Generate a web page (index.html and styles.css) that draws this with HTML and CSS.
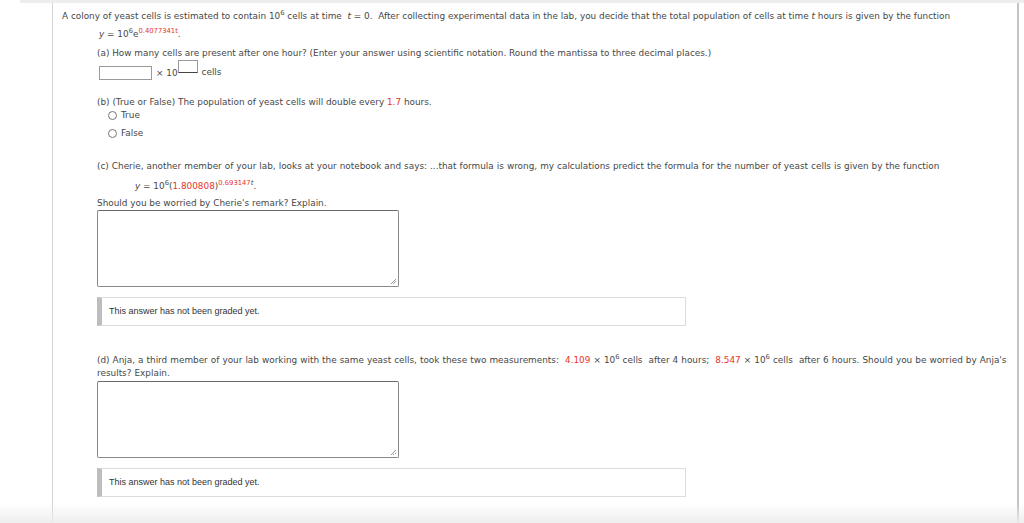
FILE: index.html
```html
<!DOCTYPE html>
<html>
<head>
<meta charset="utf-8">
<link rel="stylesheet" href="styles.css">
</head>
<body>
<div class="topbar"></div>
<div class="card">
  <p class="intro">A colony of yeast cells is estimated to contain 10<sup>6</sup> cells at time&nbsp; <i>t</i> = 0.&nbsp; After collecting experimental data in the lab, you decide that the total population of cells at time <i>t</i> hours is given by the function</p>
  <div class="body">
    <p class="formula f1"><i>y</i> = 10<sup>6</sup>e<sup class="red">0.4077341t</sup>.</p>
    <p class="qa">(a) How many cells are present after one hour? (Enter your answer using scientific notation. Round the mantissa to three decimal places.)</p>
    <div class="answer-row">
      <span class="box mant"></span>
      <span class="times">× 10</span>
      <span class="box expo"></span>
      <span class="cells">cells</span>
    </div>
    <p class="qb">(b) (True or False) The population of yeast cells will double every <span class="red">1.7</span> hours.</p>
    <div class="radios">
      <label class="radio"><span class="circle"></span>True</label>
      <label class="radio"><span class="circle"></span>False</label>
    </div>
    <p class="qc">(c) Cherie, another member of your lab, looks at your notebook and says: ...that formula is wrong, my calculations predict the formula for the number of yeast cells is given by the function</p>
    <p class="formula f2"><i>y</i> = 10<sup>6</sup>(<span class="red">1.800808</span>)<sup><span class="red">0.693147</span><i>t</i></sup>.</p>
    <p class="should">Should you be worried by Cherie's remark? Explain.</p>
    <div class="textarea"><span class="grip"></span></div>
    <div class="grade">This answer has not been graded yet.</div>
    <p class="qd">(d) Anja, a third member of your lab working with the same yeast cells, took these two measurements:&nbsp; <span class="red">4.109</span> × 10<sup>6</sup> cells&nbsp; after 4 hours;&nbsp; <span class="red">8.547</span> × 10<sup>6</sup> cells&nbsp; after 6 hours. Should you be worried by Anja's results? Explain.</p>
    <div class="textarea t2"><span class="grip"></span></div>
    <div class="grade g2">This answer has not been graded yet.</div>
  </div>
</div>
<div class="fade"></div>
</body>
</html>
```
FILE: styles.css
```css
html, body {
  margin: 0;
  padding: 0;
  background: #fff;
}
body {
  font-family: "DejaVu Sans", Verdana, sans-serif;
  font-size: 8.9px;
  line-height: 13px;
  color: #474747;
  height: 523px;
  overflow: hidden;
}
p { margin: 0; }
sup {
  font-size: 6.8px;
  line-height: 0;
  vertical-align: 4px;
}
.red { color: #e8342a; }
.topbar {
  height: 3px;
  margin-left: 20px;
  background: #ededed;
}
.card {
  margin-left: 52px;
  width: 967px;
  height: 520px;
  border-left: 1px solid #d4d4d4;
  border-right: 2px solid #c4c4c4;
  padding: 7px 0 0 9px;
  box-sizing: border-box;
}
.body {
  padding-left: 35px;
  padding-right: 4px;
}
.f1 { margin-top: 5px; padding-left: 2px; }
.qa { margin-top: 6px; }
.answer-row {
  display: flex;
  align-items: flex-end;
  padding-left: 2px;
  height: 20px;
}
.box {
  display: block;
  border: 1px solid #9a9a9a;
  box-sizing: border-box;
  background: #fff;
}
.mant { width: 53px; height: 14px; }
.times { margin-left: 4px; line-height: 14px; }
.expo { width: 20px; height: 13px; align-self: flex-start; border-bottom-color: #444; }
.cells { margin-left: 4px; line-height: 14px; padding-bottom: 1px; }
.qb { margin-top: 16px; }
.radios {
  display: flex;
  flex-direction: column;
  gap: 5px;
  padding-left: 11px;
}
.radio {
  display: flex;
  align-items: center;
  gap: 4px;
}
.circle {
  width: 9px;
  height: 9px;
  border: 1px solid #777;
  border-radius: 50%;
  box-sizing: border-box;
  display: block;
}
.qc { margin-top: 20px; word-spacing: 0.2px; }
.f2 { margin-top: 7px; padding-left: 38px; }
.should { margin-top: 4px; }
.textarea {
  position: relative;
  width: 302px;
  height: 77px;
  border: 1px solid #8a8a8a;
  border-top-color: #6a6a6a;
  border-radius: 2px;
  box-sizing: border-box;
}
.grip {
  position: absolute;
  right: 2px;
  bottom: 2px;
  width: 5px;
  height: 5px;
  background: linear-gradient(135deg, transparent 45%, #999 45%, #999 55%, transparent 55%, transparent 70%, #999 70%, #999 80%, transparent 80%);
}
.grade {
  margin-top: 10px;
  width: 589px;
  height: 29px;
  border: 1px solid #dcdcdc;
  border-left: 5px solid #bdbdbd;
  box-sizing: border-box;
  padding-left: 7px;
  display: flex;
  align-items: center;
  font-family: "Liberation Sans", Arial, sans-serif;
  font-size: 9px;
  color: #333;
}
.qd { margin-top: 28px; word-spacing: 0.22px; }
.t2 { margin-top: 1px; }
.g2 { margin-top: 10px; }
.fade {
  position: fixed;
  left: 0;
  right: 0;
  bottom: 0;
  height: 20px;
  background: linear-gradient(to bottom, rgba(240,240,240,0), rgba(236,236,236,0.9));
  pointer-events: none;
}
```
